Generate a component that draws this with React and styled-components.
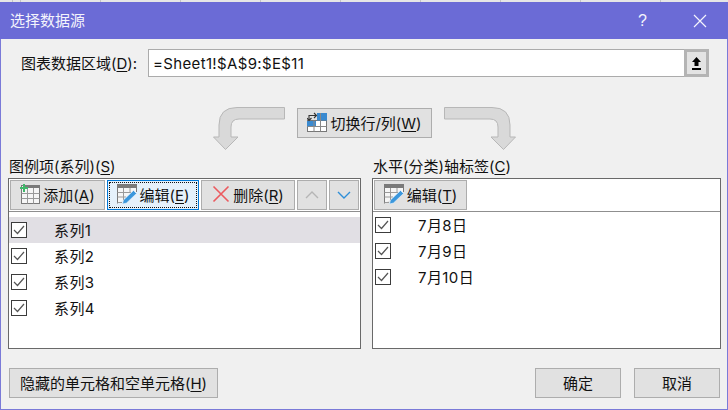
import React from 'react'
import styled, { createGlobalStyle } from 'styled-components'

const GlobalStyle = createGlobalStyle`
    html, body {
        margin: 0;
        padding: 0;
        width: 728px;
        height: 410px;
        overflow: hidden;
        background: #f0f0f0;
    }
    * {
        box-sizing: border-box;
    }
    u {
        text-underline-offset: 2px;
    }
`

const Dialog = styled.div`
    display: flex;
    flex-direction: column;
    width: 728px;
    height: 410px;
    font-family: "Inter", "Noto Sans CJK SC", sans-serif;
    font-size: 15px;
    color: #111;
`

const GridStrip = styled.div`
    height: 2px;
    background-color: #e6e6e6;
    background-image: repeating-linear-gradient(90deg, #c4c4c4 0 1px, transparent 1px 80px);
    background-position: 20px 0;
`

const TitleBar = styled.div`
    display: flex;
    align-items: center;
    height: 37px;
    padding: 0 0 0 10px;
    background: #6b6bd6;
    color: #f4f4fc;
`

const Title = styled.div`
    flex: 1;
    line-height: 20px;
`

const TitleButton = styled.div`
    display: flex;
    align-items: center;
    justify-content: center;
    width: 57px;
    height: 37px;
    font-family: "Liberation Sans", sans-serif;
    font-size: 16px;
    color: #f4f4fc;
`

const Body = styled.div`
    flex: 1;
    display: flex;
    flex-direction: column;
    padding: 10px 6px 0 7px;
    border-left: 1px solid #7a7ad8;
    border-right: 1px solid #7a7ad8;
    border-bottom: 1px solid #7a7ad8;
`

const RangeRow = styled.div`
    display: flex;
    align-items: center;
    height: 28px;
    padding-left: 13px;
`

const RangeLabel = styled.label`
    width: 127px;
    padding-bottom: 1px;
`

const RangeField = styled.div`
    display: flex;
    align-items: center;
    width: 561px;
    height: 28px;
    background: #fff;
    border: 1px solid #ababab;
    padding-left: 4px;
    font-size: 15px;
    letter-spacing: 0.35px;
`

const RangeValue = styled.span`
    flex: 1;
`

const CollapseButton = styled.div`
    display: flex;
    align-items: center;
    justify-content: center;
    width: 25px;
    height: 28px;
    margin: -1px -1px -1px 0;
    background: #e3e3e3;
    border: 3px solid #b4b4b4;
`

const SwitchRow = styled.div`
    display: flex;
    align-items: flex-start;
    justify-content: flex-start;
    height: 43px;
    margin-top: 30px;
    padding-left: 205px;
`

const Arrow = styled.svg`
    display: block;
    transform: ${p => (p.$flip ? 'scaleX(-1)' : 'none')};
`

const Button = styled.button`
    display: inline-flex;
    align-items: center;
    justify-content: center;
    gap: 3px;
    height: 30px;
    width: ${p => p.$w}px;
    padding: 0 0 2px;
    background: #e1e1e1;
    border: 1px solid #adadad;
    font: inherit;
    color: inherit;
    white-space: nowrap;
`

const SwitchButton = styled(Button)`
    margin: 1px 12px 0;
`

const Columns = styled.div`
    display: grid;
    grid-template-columns: 353px 349px;
    column-gap: 11px;
    margin-top: 8px;
`

const Group = styled.div`
    display: flex;
    flex-direction: column;
`

const GroupLabel = styled.div`
    height: 20px;
    line-height: 17px;
    padding-left: 1px;
`

const Panel = styled.div`
    height: 171px;
    background: #fff;
    border: 1px solid #696969;
`

const Toolbar = styled.div`
    display: flex;
    gap: 2px;
    height: 33px;
    padding: 1px 1px 0;
    background: #fff;
    border-bottom: 1px solid #8f8f8f;
`

const ToolButton = styled(Button)`
    background: ${p => (p.$active ? '#e5f1fb' : '#e1e1e1')};
    border: 1px solid ${p => (p.$active ? '#0078d7' : '#adadad')};
    position: relative;
    &::after {
        content: ${p => (p.$active ? '""' : 'none')};
        position: absolute;
        inset: 1px;
        border: 1px dotted #111;
    }
`

const ArrowButton = styled(ToolButton)`
    padding: 0;
`

const List = styled.div`
    display: flex;
    flex-direction: column;
    padding-top: ${p => p.$top}px;
`

const Row = styled.div`
    display: flex;
    align-items: center;
    height: 26px;
    background: ${p => (p.$selected ? '#e1dfe4' : 'transparent')};
`

const Check = styled.span`
    display: flex;
    align-items: center;
    justify-content: center;
    width: 16px;
    height: 16px;
    margin-left: 2px;
    background: #fff;
    border: 1px solid #3c3c3c;
`

const RowText = styled.span`
    margin-left: 27px;
    padding-bottom: 2px;
    font-size: 15px;
    letter-spacing: 0.4px;
`

const Footer = styled.div`
    display: flex;
    align-items: center;
    margin-top: 19px;
    padding-left: 1px;
`

const FooterActions = styled.div`
    display: flex;
    gap: 13px;
    margin-left: auto;
    margin-right: 1px;
`

const CloseIcon = () => (
    <svg width="14" height="14" viewBox="0 0 14 14">
        <path d="M1 1 L13 13 M13 1 L1 13" stroke="#f4f4fc" strokeWidth="1.2" fill="none" />
    </svg>
)

const UploadIcon = () => (
    <svg width="11" height="13" viewBox="0 0 11 13">
        <path d="M5.5 0 L10 5 H7.5 V9 H3.5 V5 H1 Z" fill="#000" />
        <rect x="1" y="11" width="9" height="2" fill="#000" />
    </svg>
)

const BendArrow = ({ flip }) => (
    <Arrow $flip={flip} width="72" height="43" viewBox="0 0 72 43">
        <path
            d="M71.5 .5 H24 Q6 .5 6 18 V30 H.5 L12.5 42.5 L25 30 H18 V20 Q18 12 26 12 H71.5 Z"
            fill="#d9d9d9"
            stroke="#b7b7b7"
        />
    </Arrow>
)

const AddIcon = () => (
    <svg width="20" height="20" viewBox="0 0 20 20">
        <rect x="1.5" y="1.5" width="18" height="18" fill="#f6f6f6" stroke="#7a7a7a" />
        <rect x="5" y="1" width="15" height="3" fill="#7a7a7a" />
        <path d="M1.5 9.5 H19.5 M1.5 14.5 H19.5 M7.5 4 V19.5 M13.5 4 V19.5" stroke="#9a9a9a" fill="none" />
        <path d="M0 4 H8 M4 0 V8" stroke="#3fb86a" strokeWidth="2" fill="none" />
    </svg>
)

const EditIcon = () => (
    <svg width="20" height="20" viewBox="0 0 20 20">
        <path d="M.5 19.5 V.5 H19.5 V8" fill="#f6f6f6" stroke="#7a7a7a" />
        <rect x="0" y="0" width="20" height="4" fill="#7a7a7a" />
        <path d="M.5 8.5 H14 M.5 13 H9 M.5 18.5 H5 M6.5 4 V18 M13 4 V9" stroke="#9a9a9a" fill="none" />
        <path d="M5.5 20 L6.5 16 L16.5 6.5 L19.5 9.5 L9.5 19 Z" fill="#3b97dc" stroke="#eaf4fb" strokeWidth=".6" />
    </svg>
)

const DeleteIcon = () => (
    <svg width="18" height="18" viewBox="0 0 18 18">
        <path d="M1.5 1.5 L16.5 16.5 M16.5 1.5 L1.5 16.5" stroke="#ec5a5f" strokeWidth="1.6" fill="none" />
    </svg>
)

const SwitchIcon = () => (
    <svg width="20" height="20" viewBox="0 0 20 20">
        <rect x=".5" y="8.5" width="19" height="11" fill="#fff" stroke="#777" />
        <rect x="10" y="1" width="10" height="7.5" fill="#3a8ad0" />
        <rect x="0" y="9" width="9" height="6" fill="#3a8ad0" />
        <path d="M7 8.5 V19.5 M13.5 1 V19.5 M.5 14.5 H19.5" stroke="#888" fill="none" />
        <path d="M2 8 V3.5 H9 M7 1 L9.5 3.5 L7 6 M0 6 L2 8.5 L4.5 6" stroke="#333" strokeWidth="1.1" fill="none" />
    </svg>
)

const ChevronIcon = ({ up }) => (
    <svg width="14" height="8" viewBox="0 0 14 8">
        <path
            d={up ? 'M1 7 L7 1 L13 7' : 'M1 1 L7 7 L13 1'}
            stroke={up ? '#b5b5b5' : '#2f8fd8'}
            strokeWidth="1.4"
            fill="none"
        />
    </svg>
)

const CheckMark = () => (
    <svg width="12" height="10" viewBox="0 0 12 10">
        <path d="M1 5 L4.5 8.5 L11 1" stroke="#555" strokeWidth="1.2" fill="none" />
    </svg>
)

const series = ['系列1', '系列2', '系列3', '系列4']
const categories = ['7月8日', '7月9日', '7月10日']

const ListRow = ({ text, selected }) => (
    <Row $selected={selected}>
        <Check><CheckMark /></Check>
        <RowText>{text}</RowText>
    </Row>
)

export default function App() {
    return (
        <Dialog>
            <GlobalStyle />
            <GridStrip />
            <TitleBar>
                <Title>选择数据源</Title>
                <TitleButton>?</TitleButton>
                <TitleButton><CloseIcon /></TitleButton>
            </TitleBar>
            <Body>
                <RangeRow>
                    <RangeLabel>图表数据区域(<u>D</u>):</RangeLabel>
                    <RangeField>
                        <RangeValue>=Sheet1!$A$9:$E$11</RangeValue>
                        <CollapseButton><UploadIcon /></CollapseButton>
                    </RangeField>
                </RangeRow>
                <SwitchRow>
                    <BendArrow />
                    <SwitchButton $w={135}>
                        <SwitchIcon />
                        <span>切换行/列(<u>W</u>)</span>
                    </SwitchButton>
                    <BendArrow flip />
                </SwitchRow>
                <Columns>
                    <Group>
                        <GroupLabel>图例项(系列)(<u>S</u>)</GroupLabel>
                        <Panel>
                            <Toolbar>
                                <ToolButton $w={95}><AddIcon /><span>添加(<u>A</u>)</span></ToolButton>
                                <ToolButton $w={92} $active><EditIcon /><span>编辑(<u>E</u>)</span></ToolButton>
                                <ToolButton $w={94}><DeleteIcon /><span>删除(<u>R</u>)</span></ToolButton>
                                <ArrowButton $w={30}><ChevronIcon up /></ArrowButton>
                                <ArrowButton $w={30}><ChevronIcon /></ArrowButton>
                            </Toolbar>
                            <List $top={5}>
                                {series.map((s, i) => (
                                    <ListRow key={s} text={s} selected={i === 0} />
                                ))}
                            </List>
                        </Panel>
                    </Group>
                    <Group>
                        <GroupLabel>水平(分类)轴标签(<u>C</u>)</GroupLabel>
                        <Panel>
                            <Toolbar>
                                <ToolButton $w={93}><EditIcon /><span>编辑(<u>T</u>)</span></ToolButton>
                            </Toolbar>
                            <List $top={0}>
                                {categories.map(c => (
                                    <ListRow key={c} text={c} />
                                ))}
                            </List>
                        </Panel>
                    </Group>
                </Columns>
                <Footer>
                    <Button $w={209}><span>隐藏的单元格和空单元格(<u>H</u>)</span></Button>
                    <FooterActions>
                        <Button $w={86}>确定</Button>
                        <Button $w={86}>取消</Button>
                    </FooterActions>
                </Footer>
            </Body>
        </Dialog>
    )
}
